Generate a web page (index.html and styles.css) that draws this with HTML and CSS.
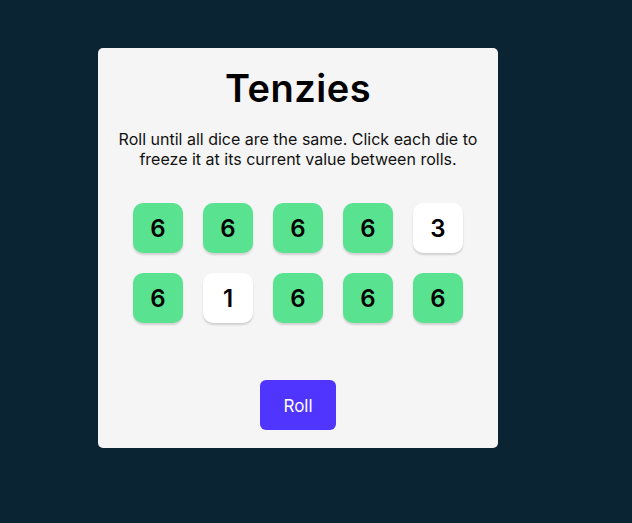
FILE: index.html
```html
<!DOCTYPE html>
<html lang="en">
<head>
<meta charset="utf-8">
<title>Tenzies</title>
<link rel="stylesheet" href="styles.css">
</head>
<body>
<main class="board">
  <h1 class="title">Tenzies</h1>
  <p class="instructions">Roll until all dice are the same. Click each die to freeze it at its current value between rolls.</p>
  <div class="dice">
    <div class="die held">6</div>
    <div class="die held">6</div>
    <div class="die held">6</div>
    <div class="die held">6</div>
    <div class="die">3</div>
    <div class="die held">6</div>
    <div class="die">1</div>
    <div class="die held">6</div>
    <div class="die held">6</div>
    <div class="die held">6</div>
  </div>
  <button class="roll">Roll</button>
</main>
</body>
</html>
```
FILE: styles.css
```css
html, body {
  margin: 0;
  background: #0B2434;
  height: 100%;
}
body {
  padding: 48px 0 0 98px;
  box-sizing: border-box;
  font-family: Inter, "Noto Sans", sans-serif;
}
.board {
  width: 400px;
  height: 400px;
  box-sizing: border-box;
  background: #F5F5F5;
  border-radius: 5px;
  display: flex;
  flex-direction: column;
  align-items: center;
  padding: 16px 14px 0;
}
.title {
  margin: 0;
  font-size: 38px;
  line-height: 48px;
  font-weight: 600;
  letter-spacing: 0.5px;
  color: #000;
}
.instructions {
  margin: 18px 0 0;
  font-size: 16px;
  line-height: 19.5px;
  text-align: center;
  color: #111;
}
.dice {
  margin-top: 34px;
  display: grid;
  grid-template-columns: repeat(5, 50px);
  gap: 20px;
}
.die {
  width: 50px;
  height: 50px;
  border-radius: 10px;
  background: #fff;
  box-shadow: 0 2px 2px rgba(0,0,0,0.15);
  display: flex;
  justify-content: center;
  align-items: center;
  font-size: 24px;
  font-weight: 600;
  color: #000;
}
.die.held {
  background: #59E391;
}
.roll {
  margin-top: 57px;
  width: 76px;
  height: 50px;
  padding: 2px 0 0;
  border: none;
  border-radius: 6px;
  background: #5035FF;
  color: #fff;
  font-family: Inter, "Noto Sans", sans-serif;
  font-size: 17px;
}
```
